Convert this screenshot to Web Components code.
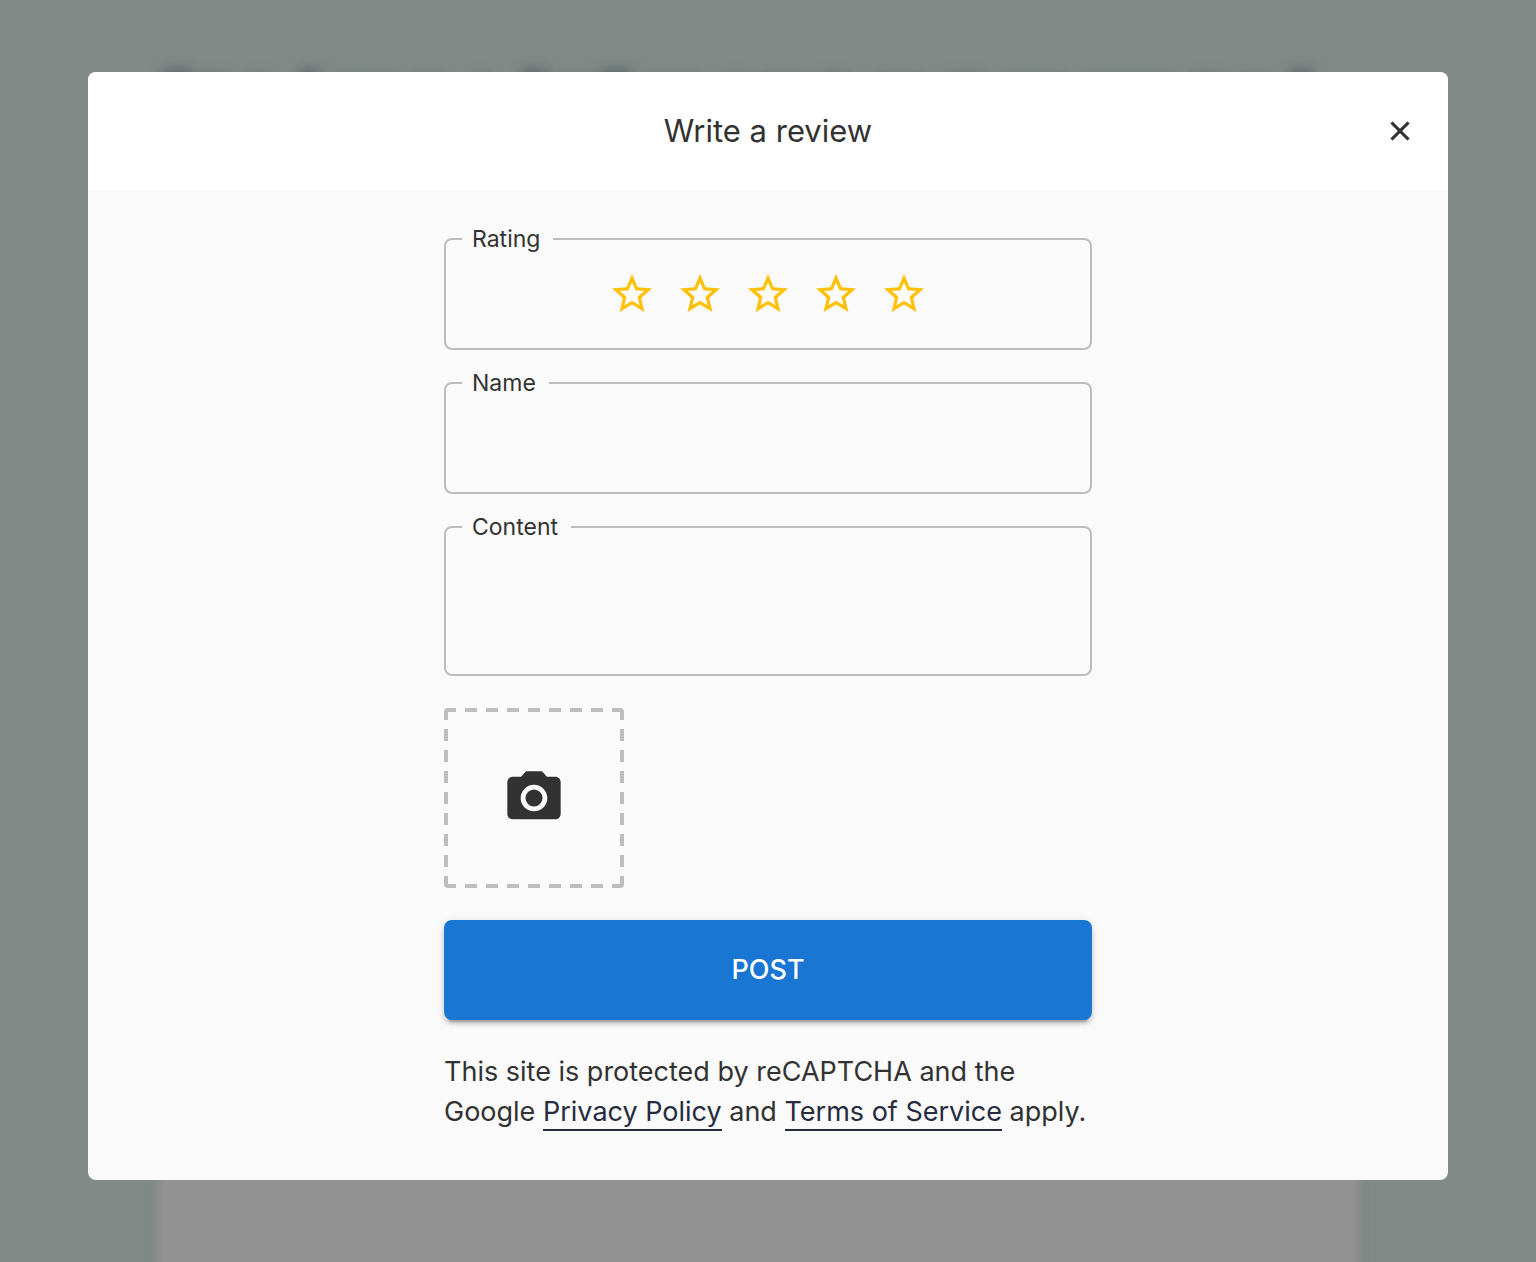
<!DOCTYPE html>
<html lang="en">
<head>
<meta charset="utf-8">
<title>Write a review</title>
<style>
  body { margin: 0; background: #818a86; font-family: Inter, "Liberation Sans", sans-serif; color: #323232; }
</style>
</head>
<body>
<page-backdrop></page-backdrop>
<review-dialog heading="Write a review">
  <review-form></review-form>
</review-dialog>

<script>
class PageBackdrop extends HTMLElement {
  connectedCallback() {
    this.attachShadow({ mode: "open" }).innerHTML = `
      <style>
        :host { position: fixed; inset: 0; padding-right: 20px; overflow: hidden; display: flex; flex-direction: column; align-items: center; background: #818a86; }
        .title { width: 1200px; height: 48px; margin-top: 64px; filter: blur(7px); }
        .card { width: 1200px; flex: 1; margin-top: 40px; margin-bottom: -24px; background: #929292; filter: blur(4px); box-shadow: 0 0 12px #7d8788; }
      </style>
      <svg class="title" viewBox="0 0 1200 48" preserveAspectRatio="none" fill="#5a6468" aria-hidden="true">
        <path d="M4 6h30v30H4zM40 12h30v23H40zM92 12h16v23H92zM142 6h20v30h-20zM175 14h60v21h-60zM255 14h30v21h-30zM318 12h12v23h-12zM362 6h28v30h-28zM396 14h40v21h-40zM442 6h32v30h-32zM490 14h50v21h-50zM566 13h22v22h-22zM600 14h50v21h-50zM664 12h26v23h-26zM716 14h50v21h-50zM790 12h34v23h-34zM850 14h60v21h-60zM930 14h80v21h-80zM1034 12h28v23h-28zM1076 14h30v21h-30zM1130 6h26v30h-26z"/>
      </svg>
      <div class="card"></div>`;
  }
}

class ReviewDialog extends HTMLElement {
  connectedCallback() {
    this.attachShadow({ mode: "open" }).innerHTML = `
      <style>
        :host { display: block; position: relative; padding: 72px 88px; }
        section { background: #fafafa; border-radius: 8px; overflow: hidden; }
        header { display: grid; grid-template-columns: 1fr auto 1fr; align-items: center; background: #fff; padding: 0 16px; min-height: 118px; }
        h1 { grid-column: 2; margin: 0; font-size: 31px; line-height: 40px; font-weight: 400; }
        button { justify-self: end; display: flex; padding: 16px; border: 0; background: none; color: inherit; cursor: pointer; }
        svg { width: 32px; height: 32px; fill: currentColor; }
      </style>
      <section role="dialog" aria-labelledby="heading">
        <header>
          <h1 id="heading">${this.getAttribute("heading")}</h1>
          <button type="button" aria-label="Close"><svg viewBox="0 0 24 24"><path d="M19 6.41 17.59 5 12 10.59 6.41 5 5 6.41 10.59 12 5 17.59 6.41 19 12 13.41 17.59 19 19 17.59 13.41 12z" stroke="currentColor" stroke-width=".4"/></svg></button>
        </header>
        <slot></slot>
      </section>`;
  }
}

const outline = `
  :host { display: block; }
  fieldset { min-width: 0; margin: 0; padding: 0; border: 2px solid #bdbdbd; border-radius: 8px; }
  legend { margin-left: 16px; padding: 0 13px 0 10px; font-size: 23px; line-height: 24px; }
`;

class StarRating extends HTMLElement {
  connectedCallback() {
    const star = n => `<label><input type="radio" name="rating" value="${n}" aria-label="${n} of 5"><svg viewBox="0 0 24 24" aria-hidden="true"><path d="m22 9.24-7.19-.62L12 2 9.19 8.63 2 9.24l5.46 4.73L5.82 21 12 17.27 18.18 21l-1.63-7.03L22 9.24zM12 15.4l-3.76 2.27 1-4.28-3.32-2.88 4.38-.38L12 6.1l1.71 4.04 4.38.38-3.32 2.88 1 4.28L12 15.4z"/></svg></label>`;
    this.attachShadow({ mode: "open" }).innerHTML = `
      <style>${outline}
        .stars { display: flex; justify-content: center; gap: 20px; padding: 19px 0 30px; }
        label { display: grid; cursor: pointer; }
        input { grid-area: 1 / 1; appearance: none; margin: 0; outline-offset: 4px; }
        svg { grid-area: 1 / 1; width: 48px; height: 48px; fill: #ffc107; }
      </style>
      <fieldset><legend>Rating</legend><div class="stars">${[1, 2, 3, 4, 5].map(star).join("")}</div></fieldset>`;
  }
}

class OutlinedField extends HTMLElement {
  connectedCallback() {
    const multi = this.hasAttribute("multiline");
    this.attachShadow({ mode: "open" }).innerHTML = `
      <style>${outline}
        input, textarea { display: block; box-sizing: border-box; width: 100%; height: 97px; padding: 8px 26px 20px; border: 0; outline: 0; resize: none; background: none; color: inherit; font: 27px/40px Inter, "Liberation Sans", sans-serif; }
        textarea { height: 135px; }
      </style>
      <fieldset><legend><label for="control">${this.getAttribute("label")}</label></legend>
      ${multi ? `<textarea id="control"></textarea>` : `<input id="control" type="text">`}</fieldset>`;
  }
}

class PhotoPicker extends HTMLElement {
  connectedCallback() {
    this.attachShadow({ mode: "open" }).innerHTML = `
      <style>
        :host { display: flex; }
        button { display: grid; place-items: center; padding: 0; border: 0; border-radius: 4px; overflow: hidden; background: none; color: inherit; cursor: pointer; }
        svg { grid-area: 1 / 1; }
        .frame { width: 180px; height: 180px; fill: none; stroke: #bdbdbd; stroke-width: 4; stroke-dasharray: 12 9; }
        .camera { width: 64px; height: 64px; fill: currentColor; }
      </style>
      <button type="button" aria-label="Add a photo">
        <svg class="frame" viewBox="0 0 180 180"><path d="M0 2h180M0 178h180M2 0v180M178 0v180"/></svg>
        <svg class="camera" viewBox="0 0 24 24"><circle cx="12" cy="12" r="3.2"/><path d="M9 2 7.17 4H4c-1.1 0-2 .9-2 2v12c0 1.1.9 2 2 2h16c1.1 0 2-.9 2-2V6c0-1.1-.9-2-2-2h-3.17L15 2H9zm3 15c-2.76 0-5-2.24-5-5s2.24-5 5-5 5 2.24 5 5-2.24 5-5 5z"/></svg>
      </button>`;
  }
}

class ReviewForm extends HTMLElement {
  connectedCallback() {
    this.attachShadow({ mode: "open" }).innerHTML = `
      <style>
        :host { display: block; padding: 37px 24px 48px; }
        form { display: flex; flex-direction: column; max-width: 648px; margin: 0 auto; }
        .fields { display: flex; flex-direction: column; gap: 21px; margin-bottom: 32px; }
        .post { margin: 32px 0; padding: 30px; border: 0; border-radius: 8px; background: #1976d2; color: #fff; font: 500 27px/40px Inter, "Liberation Sans", sans-serif; box-shadow: 0 6px 2px -4px rgba(0,0,0,.2), 0 4px 4px rgba(0,0,0,.14), 0 2px 10px rgba(0,0,0,.12); cursor: pointer; }
        p { margin: 0; font-size: 27px; line-height: 40px; }
        a { color: #262b40; text-decoration: none; padding-bottom: 1px; border-bottom: 2px solid; }
      </style>
      <form>
        <div class="fields">
          <star-rating></star-rating>
          <outlined-field label="Name"></outlined-field>
          <outlined-field label="Content" multiline></outlined-field>
        </div>
        <photo-picker></photo-picker>
        <button class="post" type="button">POST</button>
        <p>This site is protected by reCAPTCHA and the Google <a href="#privacy">Privacy Policy</a> and <a href="#terms">Terms of Service</a> apply.</p>
      </form>`;
  }
}

customElements.define("page-backdrop", PageBackdrop);
customElements.define("review-dialog", ReviewDialog);
customElements.define("star-rating", StarRating);
customElements.define("outlined-field", OutlinedField);
customElements.define("photo-picker", PhotoPicker);
customElements.define("review-form", ReviewForm);
</script>
</body>
</html>
